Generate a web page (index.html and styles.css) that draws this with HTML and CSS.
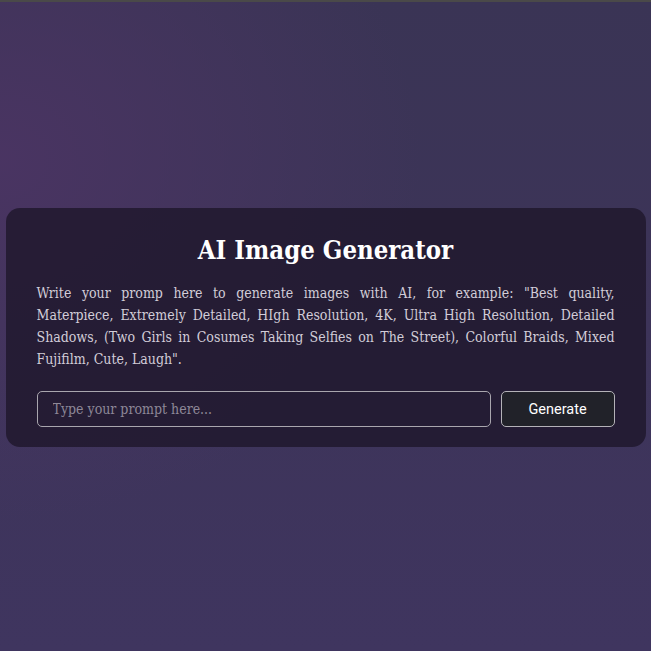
FILE: index.html
```html
<!DOCTYPE html>
<html lang="en">
<head>
<meta charset="utf-8">
<title>AI Image Generator</title>
<link rel="stylesheet" href="styles.css">
</head>
<body>
<main class="page">
  <section class="card">
    <h1 class="title">AI Image Generator</h1>
    <p class="desc"><span class="line">Write your promp here to generate images with AI, for example: "Best quality,</span> <span class="line">Materpiece, Extremely Detailed, HIgh Resolution, 4K, Ultra High Resolution, Detailed</span> <span class="line">Shadows, (Two Girls in Cosumes Taking Selfies on The Street), Colorful Braids, Mixed</span> <span class="line last">Fujifilm, Cute, Laugh".</span></p>
    <form class="form" onsubmit="return false">
      <input class="prompt" type="text" placeholder="Type your prompt here...">
      <button class="btn" type="submit">Generate</button>
    </form>
  </section>
</main>
</body>
</html>
```

FILE: styles.css
```css
* { box-sizing: border-box; }
html, body { margin: 0; padding: 0; }
body {
  min-height: 100vh;
  border-top: 2px solid #4a4949;
  background:
    radial-gradient(ellipse 420px 360px at 0px 160px, rgba(76, 52, 100, 0.85), rgba(76, 52, 100, 0) 100%),
    linear-gradient(180deg, #3a3455 0%, #3d3459 50%, #3f355f 100%);
  font-family: "DejaVu Serif Condensed", "DejaVu Serif", serif;
}
.page {
  min-height: calc(100vh - 2px);
  padding-top: 2px;
  display: flex;
  align-items: center;
  justify-content: center;
}
.card {
  width: 640px;
  background: rgba(30, 23, 43, 0.8);
  border-radius: 14px;
  padding: 27px 31px 20px;
}
.title {
  margin: 0 0 16px;
  text-align: center;
  color: #fff;
  font-size: 25.5px;
  line-height: 31px;
  font-weight: 700;
}
.desc {
  margin: 0 0 21px;
  color: #d2cdd8;
  font-size: 14px;
  line-height: 22px;
}
.line {
  display: block;
  text-align: justify;
  text-align-last: justify;
  white-space: nowrap;
}
.line.last { text-align-last: left; }
.form {
  display: flex;
  gap: 10px;
}
.prompt {
  flex: 1;
  height: 36px;
  border: 1px solid #a9a6ae;
  border-radius: 5px;
  background: transparent;
  padding: 0 15px;
  color: #ddd;
  font-family: inherit;
  font-size: 14px;
  outline: none;
}
.prompt::placeholder { color: #8e8898; }
.btn {
  width: 114px;
  height: 36px;
  border: 1px solid #b4b2b8;
  border-radius: 5px;
  background: #212229;
  color: #fff;
  font-family: Roboto, "Liberation Sans", sans-serif;
  font-size: 14.5px;
  font-weight: 400;
}
```
